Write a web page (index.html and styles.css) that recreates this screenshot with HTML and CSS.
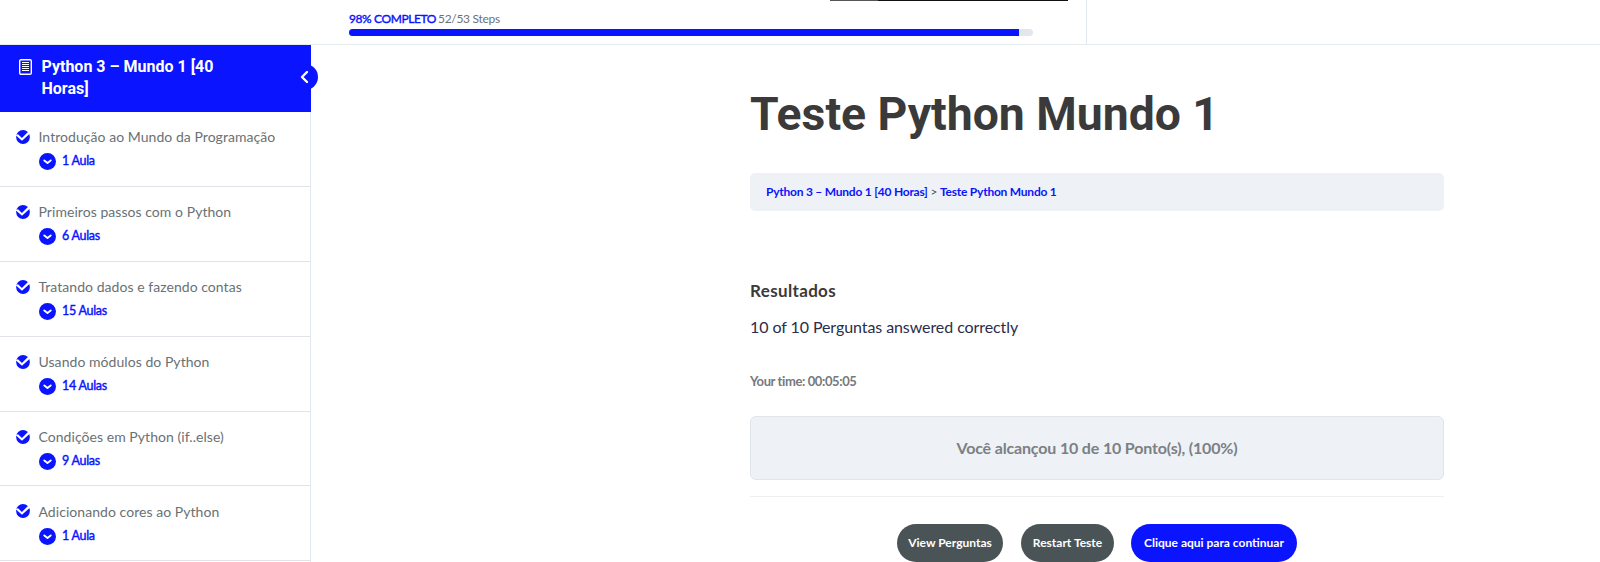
FILE: index.html
```html
<!DOCTYPE html>
<html lang="pt-BR">
<head>
<meta charset="utf-8">
<title>Teste Python Mundo 1</title>
<link rel="stylesheet" href="styles.css">
</head>
<body>
<svg class="defs" width="0" height="0">
  <symbol id="check" viewBox="0 0 14 14"><circle cx="7" cy="7" r="6.9" fill="#0a14ff"/><path d="M-.2 5.2 2 4.2 5.9 7.9 12.2 1.8 14.2 3.4 6 10.8Z" fill="#fff"/></symbol>
  <symbol id="down" viewBox="0 0 17 17"><circle cx="8.5" cy="8.5" r="8.5" fill="#0a14ff"/><path d="M5.3 7.4 8.5 9.9l3.2-2.5" fill="none" stroke="#fff" stroke-width="1.9" stroke-linecap="round" stroke-linejoin="round"/></symbol>
</svg>
<header class="top">
  <div class="progress">
    <div class="progress-text"><b>98% COMPLETO</b><span>52/53 Steps</span></div>
    <div class="track"><div class="fill"></div></div>
    <div class="strip"></div>
  </div>
  <div class="top-end"></div>
</header>
<div class="page">
  <aside class="side">
    <div class="course">
      <svg class="doc" width="13" height="16" viewBox="0 0 13 16" fill="none" stroke="#fff"><rect x=".7" y=".7" width="11.6" height="14.6" rx="1.3" stroke-width="1.4"/><path d="M3 3.5h7M3 5.5h7M3 7.5h7M3 9.5h7M3 11.5h7" stroke-width="1"/></svg>
      <div class="course-name">Python 3 – Mundo 1 [40 Horas]</div>
      <div class="toggle"><svg width="9" height="14" viewBox="0 0 9 14"><path d="M7 2 2 7l5 5" fill="none" stroke="#fff" stroke-width="2.4" stroke-linecap="round" stroke-linejoin="round"/></svg></div>
    </div>
    <div class="lesson"><div class="name"><svg><use href="#check"/></svg><span>Introdução ao Mundo da Programação</span></div><div class="count"><svg><use href="#down"/></svg><span>1 Aula</span></div></div>
    <div class="lesson"><div class="name"><svg><use href="#check"/></svg><span>Primeiros passos com o Python</span></div><div class="count"><svg><use href="#down"/></svg><span>6 Aulas</span></div></div>
    <div class="lesson"><div class="name"><svg><use href="#check"/></svg><span>Tratando dados e fazendo contas</span></div><div class="count"><svg><use href="#down"/></svg><span>15 Aulas</span></div></div>
    <div class="lesson"><div class="name"><svg><use href="#check"/></svg><span>Usando módulos do Python</span></div><div class="count"><svg><use href="#down"/></svg><span>14 Aulas</span></div></div>
    <div class="lesson"><div class="name"><svg><use href="#check"/></svg><span>Condições em Python (if..else)</span></div><div class="count"><svg><use href="#down"/></svg><span>9 Aulas</span></div></div>
    <div class="lesson"><div class="name"><svg><use href="#check"/></svg><span>Adicionando cores ao Python</span></div><div class="count"><svg><use href="#down"/></svg><span>1 Aula</span></div></div>
  </aside>
  <main class="main">
    <h1>Teste Python Mundo 1</h1>
    <nav class="crumbs"><b>Python 3 – Mundo 1 [40 Horas]</b> <span>&gt;</span> <b>Teste Python Mundo 1</b></nav>
    <h4>Resultados</h4>
    <p class="answered">10 of 10 Perguntas answered correctly</p>
    <p class="time">Your time: 00:05:05</p>
    <div class="score"><span>Você alcançou 10 de 10 Ponto(s), (100%)</span></div>
    <div class="actions">
      <button class="b1">View Perguntas</button>
      <button class="b2">Restart Teste</button>
      <button class="b3">Clique aqui para continuar</button>
    </div>
  </main>
</div>
</body>
</html>
```
FILE: styles.css
```css
* { box-sizing: border-box; }
body { margin: 0; height: 562px; overflow: hidden; background: #fff; font-family: Lato, sans-serif; color: #4a5456; display: flex; flex-direction: column; }
.defs { position: absolute; }
.top { height: 45px; flex: none; display: flex; border-bottom: 1px solid #e6ebef; }
.progress { position: relative; width: 1087px; padding: 11px 0 0 349px; border-right: 1px solid #e2e7ed; }
.progress-text { display: flex; gap: 5px; height: 17.5px; line-height: 16px; font-size: 12px; white-space: nowrap; color: #6b7176; letter-spacing: -.3px; }
.progress-text b { font-weight: 400; -webkit-text-stroke: .4px; color: #0a14ff; letter-spacing: -.4px; width: 84px; }
.track { width: 684px; height: 7px; border-radius: 4px; background: #e2e7ed; overflow: hidden; }
.fill { width: 670px; height: 7px; background: #0a14ff; }
.strip { position: absolute; left: 830px; top: 0; width: 238px; height: 1px; background: linear-gradient(90deg, #555 0 48px, #111 48px); }
.page { flex: 1; min-height: 0; display: flex; }
.side { width: 311px; flex: none; border-right: 1px solid #e2e7ed; }
.course { position: relative; width: 311px; height: 67px; background: #0a14ff; color: #fff; display: flex; padding: 11px 0 0 18.5px; gap: 10px; }
.doc { margin-top: 3px; flex: none; }
.course-name { width: 190px; font: 700 16px/22px Roboto, sans-serif; }
.toggle { position: absolute; left: 292px; top: 19px; width: 26px; height: 26px; border-radius: 50%; background: #0a14ff; display: flex; align-items: center; padding-left: 8px; }
.lesson { height: 74.9px; border-bottom: 1px solid #e2e3e8; padding: 15px 0 0 16px; white-space: nowrap; }
.name { display: flex; align-items: center; gap: 8.5px; height: 20px; font-size: 14px; color: #6a7174; letter-spacing: .05px; }
.name span { margin-bottom: .5px; }
.name svg { width: 14px; height: 14px; }
.count { display: flex; align-items: center; gap: 6px; height: 18px; margin: 5.6px 0 0 23px; font-size: 12.5px; font-weight: 400; color: #0a14ff; letter-spacing: -.28px; }
.count svg { width: 17px; height: 17px; }
.count span { margin-bottom: 1.5px; -webkit-text-stroke: .4px; }
.main { width: 694px; margin-left: 439px; white-space: nowrap; }
h1 { margin: 39px 0 0; font: 700 46.3px/60px Roboto, sans-serif; color: #3a3a3a; }
.crumbs { margin-top: 29px; height: 37.5px; border-radius: 5px; background: #eef2f6; padding-left: 16px; font-size: 12px; line-height: 37px; letter-spacing: -.23px; }
.crumbs b { color: #0a14ff; }
h4 { margin: 69.5px 0 0; font-size: 17px; line-height: 22px; letter-spacing: .35px; color: #3a3a3a; }
p { margin: 0; }
.answered { margin-top: 13px; font-size: 16px; line-height: 24px; letter-spacing: -.08px; color: #2b2d4a; }
.time { margin-top: 33px; font-size: 13px; line-height: 18px; font-weight: 700; letter-spacing: -.39px; color: #76797d; }
.score { margin-top: 26px; height: 64px; border: 1px solid #dfe5ea; border-radius: 6px; background: #eef2f6; text-align: center; line-height: 62px; font-size: 16px; font-weight: 700; letter-spacing: -.16px; color: #7b8084; }
.actions { margin-top: 16px; border-top: 1px solid #edeff1; padding: 27px 0 0 147px; display: flex; }
button { height: 38px; flex: none; padding: 0 0 2px; border: 0; border-radius: 19px; background: #4a5456; color: #fff; font: 700 12px Lato, sans-serif; white-space: nowrap; }
.b1 { width: 106px; margin-right: 18px; }
.b2 { width: 93px; margin-right: 17px; }
.b3 { width: 166px; background: #0a14ff; }
```
